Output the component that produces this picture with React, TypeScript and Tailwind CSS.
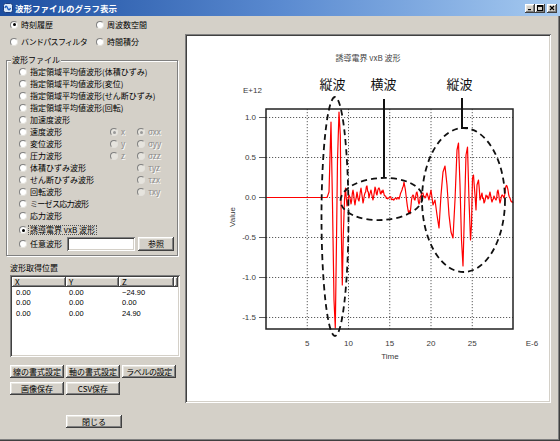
import React from "react";

// classic win32 bevels
const RAISED =
  "bg-[#d4d0c8] shadow-[inset_-1px_-1px_#404040,inset_1px_1px_#ffffff,inset_-2px_-2px_#808080,inset_2px_2px_#e8e6e0]";
const SUNKEN =
  "shadow-[inset_1px_1px_#808080,inset_-1px_-1px_#ffffff,inset_2px_2px_#404040,inset_-2px_-2px_#d4d0c8]";

function Radio({ checked = false, disabled = false }: { checked?: boolean; disabled?: boolean }) {
  return (
    <span
      className={
        "flex h-[8px] w-[8px] shrink-0 items-center justify-center rounded-full border border-t-[#808080] border-l-[#808080] border-r-[#e4e2dc] border-b-[#e4e2dc] " +
        (disabled ? "bg-[#e6e4de]" : "bg-white")
      }
    >
      {checked && (
        <span className={"h-[3px] w-[3px] rounded-full " + (disabled ? "bg-[#9a9a9a]" : "bg-black")} />
      )}
    </span>
  );
}

function Item({
  label,
  checked,
  disabled,
  focus,
  w,
  tight,
}: {
  label: React.ReactNode;
  checked?: boolean;
  disabled?: boolean;
  focus?: boolean;
  w?: string;
  tight?: boolean;
}) {
  return (
    <div className={"flex items-center gap-[2px] " + (w ?? "")}>
      <Radio checked={checked} disabled={disabled} />
      <span
        className={
          "whitespace-nowrap px-[1px] " +
          (tight ? "tracking-[-0.7px] " : "") +
          (disabled ? "text-[#8c8c8c] [text-shadow:1px_1px_0_#ffffff] " : "text-black ") +
          (focus ? "outline outline-1 outline-dotted outline-[#555]" : "")
        }
      >
        {label}
      </span>
    </div>
  );
}

// key points of the trace, in window pixels
const KEY: [number, number][] = [
  [266, 197.5], [327, 197.5],
  [329, 192], [331, 122], [332.5, 205], [334, 300], [335.3, 328], [336.5, 240], [337.5, 160],
  [339, 112], [340.3, 135], [341.3, 230], [342.3, 285], [343.3, 235], [344.5, 200], [345.5, 188], [347, 206],
  [349, 195], [351, 204], [353, 190], [355, 205], [357, 192], [359, 201], [361, 188], [363, 203],
  [365, 193], [367, 186], [369, 198], [371, 190], [373, 200], [375, 187], [377, 195], [379, 188],
  [381, 194], [383, 190], [385, 196], [387, 198], [390, 197], [393, 199], [396, 198], [399, 199],
  [402, 190], [404, 182], [406, 195], [408, 210], [410, 214], [411.5, 200], [413, 195], [415, 200],
  [417, 192], [419, 204], [421, 196], [423, 193], [425, 198],
  [427, 193], [429, 200], [431, 190], [433, 205], [435, 200], [437, 215], [439, 228], [441, 195],
  [443, 172], [445, 166], [447, 185], [449, 215], [451, 232], [453, 238], [455, 200], [457, 150],
  [458.5, 143], [460, 185], [461.5, 240], [463, 266], [464.5, 210], [466, 155], [467.5, 147],
  [469, 200], [470.5, 240], [471.5, 225], [472.5, 178], [473.5, 175], [475, 195], [476, 210],
  [477, 185], [478.5, 180], [480, 200], [482, 193], [484, 203], [486, 195], [488, 199], [490, 192],
  [492, 202], [494, 196], [496, 200], [498, 190], [500, 203], [502, 195], [504, 198], [506, 186],
  [508, 190], [510, 198], [513, 203],
];

function buildWave() {
  let seed = 11;
  const rnd = () => {
    seed = (seed * 9301 + 49297) % 233280;
    return seed / 233280;
  };
  const pts: string[] = [];
  for (let i = 0; i < KEY.length - 1; i++) {
    const [x0, y0] = KEY[i];
    const [x1, y1] = KEY[i + 1];
    const steps = Math.max(1, Math.round((x1 - x0) / 0.7));
    for (let s = 0; s < steps; s++) {
      const f = s / steps;
      const x = x0 + (x1 - x0) * f;
      let y = y0 + (y1 - y0) * f;
      const noisy = (x > 346 && x < 426) || x > 474;
      if (noisy && s > 0) y += (rnd() - 0.5) * 4;
      pts.push(`${x.toFixed(2)},${y.toFixed(2)}`);
    }
  }
  const last = KEY[KEY.length - 1];
  pts.push(`${last[0]},${last[1]}`);
  return pts.join(" ");
}

const WAVE = buildWave();
const yOf = (v: number) => 197.5 - v * 80;
const xOf = (t: number) => 266 + t * 8.25;
const SANS = "'Liberation Sans', Arial, sans-serif";
const JPF = "'Noto Sans CJK JP', sans-serif";

function Chart() {
  const yt = [1.0, 0.5, 0, -0.5, -1.0, -1.5];
  const xt = [5, 10, 15, 20, 25];
  return (
    <svg viewBox="185 34 366 369" width="366" height="369" className="block">
      <text x="368" y="59" fontSize="8" fill="#444" fontFamily={JPF} textAnchor="middle" dominantBaseline="middle">
        誘導電界 vxB 波形
      </text>

      {/* grid */}
      {yt.map((v) => (
        <g key={"y" + v}>
          <line x1="266" x2="513" y1={yOf(v)} y2={yOf(v)} stroke="#333" strokeWidth="0.8" strokeDasharray="1.2 1.8" />
          <line x1="259" x2="266" y1={yOf(v)} y2={yOf(v)} stroke="#333" strokeWidth="0.8" />
          <text x="256" y={yOf(v)} fontSize="8" fill="#3a3a3a" fontFamily={SANS} textAnchor="end" dominantBaseline="middle">
            {v.toFixed(1)}
          </text>
        </g>
      ))}
      {xt.map((t) => (
        <g key={"x" + t}>
          <line x1={xOf(t)} x2={xOf(t)} y1="109" y2="329" stroke="#333" strokeWidth="0.8" strokeDasharray="1.2 1.8" />
          <text x={xOf(t)} y="344" fontSize="8" fill="#3a3a3a" fontFamily={SANS} textAnchor="middle" dominantBaseline="middle">
            {t}
          </text>
        </g>
      ))}

      <text x="243" y="91" fontSize="8" fill="#3a3a3a" fontFamily={SANS} dominantBaseline="middle">
        E+12
      </text>
      <text x="532" y="344" fontSize="8" fill="#3a3a3a" fontFamily={SANS} textAnchor="middle" dominantBaseline="middle">
        E-6
      </text>
      <text x="390" y="357" fontSize="8" fill="#3a3a3a" fontFamily={SANS} textAnchor="middle" dominantBaseline="middle">
        Time
      </text>
      <text
        x="233"
        y="217"
        fontSize="8"
        fill="#3a3a3a"
        fontFamily={SANS}
        textAnchor="middle"
        dominantBaseline="middle"
        transform="rotate(-90 233 217)"
      >
        Value
      </text>

      <polyline points={WAVE} fill="none" stroke="#ff0000" strokeWidth="1.2" strokeLinejoin="round" />

      <rect x="266" y="109" width="247" height="220" fill="none" stroke="#222" strokeWidth="1.5" />

      {/* annotations */}
      <g fill="none" stroke="#111" strokeWidth="1.8" strokeDasharray="6 4">
        <ellipse cx="335" cy="216.5" rx="13.5" ry="119.5" />
        <ellipse cx="381.5" cy="199" rx="41" ry="21" transform="rotate(-3 381.5 199)" />
        <ellipse cx="463.5" cy="200" rx="41.5" ry="72" />
      </g>
      <line x1="384" x2="384" y1="99" y2="178" stroke="#111" strokeWidth="2" />
      <polyline points="462,98 462,128 468,128" fill="none" stroke="#111" strokeWidth="2" />
      <g fontSize="13" fill="#111" fontFamily={JPF} textAnchor="middle" dominantBaseline="middle">
        <text x="332.5" y="85">縦波</text>
        <text x="383.5" y="85">横波</text>
        <text x="459.5" y="85">縦波</text>
      </g>
    </svg>
  );
}

function Btn({ children, w = "w-[54px]" }: { children: React.ReactNode; w?: string }) {
  return <div className={"flex h-[13px] items-center justify-center " + w + " " + RAISED}>{children}</div>;
}

function TitleBtn({ children }: { children: React.ReactNode }) {
  return (
    <div className={"flex h-[9px] w-[10px] items-center justify-center " + RAISED}>
      <svg width="6" height="6" viewBox="0 0 6 6">
        {children}
      </svg>
    </div>
  );
}

export default function App() {
  return (
    <div className="relative h-[441px] w-[560px] overflow-hidden bg-[#d4d0c8] font-['Noto_Sans_CJK_JP',sans-serif] text-[8px] leading-none text-black shadow-[inset_-1px_-1px_#404040,inset_-2px_-2px_#808080]">
      {/* title bar */}
      <div className="flex h-[16px] items-center bg-gradient-to-r from-[#1c4ea0] via-[#5a8ad0] to-[#a6caf0] pl-[3px] pr-[3px]">
        <svg width="10" height="10" viewBox="0 0 10 10" className="mr-[2px]">
          <rect x="0.5" y="0.5" width="9" height="9" rx="2" fill="#dbe9f8" stroke="#1c3c7c" />
          <path d="M2 5 Q3 1.5 4.5 5 T7.5 5" fill="none" stroke="#1f5fc0" strokeWidth="1.4" />
        </svg>
        <span className="text-[8.5px] font-bold text-white">波形ファイルのグラフ表示</span>
        <div className="ml-auto flex items-center">
          <TitleBtn>
            <rect x="1" y="4" width="3" height="1.2" fill="#000" />
          </TitleBtn>
          <TitleBtn>
            <rect x="0.5" y="0.5" width="5" height="5" fill="none" stroke="#000" strokeWidth="1" />
            <rect x="0.5" y="0.5" width="5" height="1.4" fill="#000" />
          </TitleBtn>
          <div className="w-[2px]" />
          <TitleBtn>
            <path d="M1 1 L5 5 M5 1 L1 5" stroke="#000" strokeWidth="1.2" />
          </TitleBtn>
        </div>
      </div>

      <div className="flex">
        {/* left column */}
        <div className="flex w-[185px] flex-col">
          <div className="flex h-[17px] items-center pl-[10px]">
            <Item label="時刻履歴" checked w="w-[86px]" />
            <Item label="周波数空間" />
          </div>
          <div className="flex h-[17px] items-center pl-[10px]">
            <Item label="バンドパスフィルタ" tight w="w-[86px]" />
            <Item label="時間積分" />
          </div>

          <div className="relative ml-[6px] mt-[10px] w-[172px] border border-[#808080] pb-[4px] pl-[12px] pt-[5px] shadow-[1px_1px_0_#ffffff,inset_1px_1px_0_#ffffff]">
            <span className="absolute -top-[5px] left-[4px] bg-[#d4d0c8] px-[1px]">波形ファイル</span>
            <div className="flex h-[12px] items-center">
              <Item label="指定領域平均値波形(体積ひずみ)" />
            </div>
            <div className="flex h-[12px] items-center">
              <Item label="指定領域平均値波形(変位)" />
            </div>
            <div className="flex h-[12px] items-center">
              <Item label="指定領域平均値波形(せん断ひずみ)" />
            </div>
            <div className="flex h-[12px] items-center">
              <Item label="指定領域平均値波形(回転)" />
            </div>
            <div className="flex h-[12px] items-center">
              <Item label="加速度波形" />
            </div>
            <div className="flex h-[12px] items-center">
              <Item label="速度波形" w="w-[91px]" />
              <Item label="x" disabled checked w="w-[27px]" />
              <Item label="σxx" disabled checked />
            </div>
            <div className="flex h-[12px] items-center">
              <Item label="変位波形" w="w-[91px]" />
              <Item label="y" disabled w="w-[27px]" />
              <Item label="σyy" disabled />
            </div>
            <div className="flex h-[12px] items-center">
              <Item label="圧力波形" w="w-[91px]" />
              <Item label="z" disabled w="w-[27px]" />
              <Item label="σzz" disabled />
            </div>
            <div className="flex h-[12px] items-center">
              <Item label="体積ひずみ波形" w="w-[118px]" />
              <Item label="τyz" disabled />
            </div>
            <div className="flex h-[12px] items-center">
              <Item label="せん断ひずみ波形" w="w-[118px]" />
              <Item label="τzx" disabled />
            </div>
            <div className="flex h-[12px] items-center">
              <Item label="回転波形" w="w-[118px]" />
              <Item label="τxy" disabled />
            </div>
            <div className="flex h-[12px] items-center">
              <Item label="ミーゼス応力波形" tight />
            </div>
            <div className="flex h-[12px] items-center">
              <Item label="応力波形" />
            </div>
            <div className="mt-[2px] flex h-[12px] items-center">
              <Item label="誘導電界 vxB 波形" checked focus />
            </div>
            <div className="flex h-[15px] items-center">
              <Item label="任意波形" w="w-[48px]" />
              <div className={"h-[14px] w-[68px] bg-white " + SUNKEN} />
              <div className="ml-[3px]">
                <Btn w="w-[36px] h-[14px]">参照</Btn>
              </div>
            </div>
          </div>

          <div className="ml-[10px] mt-[6px] flex h-[12px] items-center">波形取得位置</div>

          <div className={"ml-[10px] mt-[1px] h-[82px] w-[170px] bg-white p-[2px] " + SUNKEN}>
            <div className="flex h-[10px]">
              <div className={"flex w-[54px] items-center pl-[3px] " + RAISED}>X</div>
              <div className={"flex w-[53px] items-center pl-[3px] " + RAISED}>Y</div>
              <div className={"flex w-[55px] items-center pl-[3px] " + RAISED}>Z</div>
              <div className={"flex-1 " + RAISED} />
            </div>
            <div className="font-['Liberation_Sans',Arial,sans-serif] text-[7.5px]">
              {[
                ["0.00", "0.00", "−24.90"],
                ["0.00", "0.00", "0.00"],
                ["0.00", "0.00", "24.90"],
              ].map((r, i) => (
                <div key={i} className="flex h-[10.5px] items-center">
                  <span className="w-[54px] pl-[4px]">{r[0]}</span>
                  <span className="w-[53px] pl-[3px]">{r[1]}</span>
                  <span className="pl-[3px]">{r[2]}</span>
                </div>
              ))}
            </div>
          </div>

          <div className="ml-[10px] mt-[8px] flex gap-[2px]">
            <Btn>線の書式設定</Btn>
            <Btn>軸の書式設定</Btn>
            <Btn>
              <span className="tracking-[-0.4px]">ラベルの設定</span>
            </Btn>
          </div>
          <div className="ml-[10px] mt-[4px] flex gap-[2px]">
            <Btn>画像保存</Btn>
            <Btn>CSV保存</Btn>
          </div>
          <div className="ml-[66px] mt-[20px]">
            <Btn w="w-[56px]">閉じる</Btn>
          </div>
        </div>

        {/* chart panel */}
        <div className={"mt-[18px] h-[369px] w-[366px] bg-white " + SUNKEN}>
          <Chart />
        </div>
      </div>
    </div>
  );
}
